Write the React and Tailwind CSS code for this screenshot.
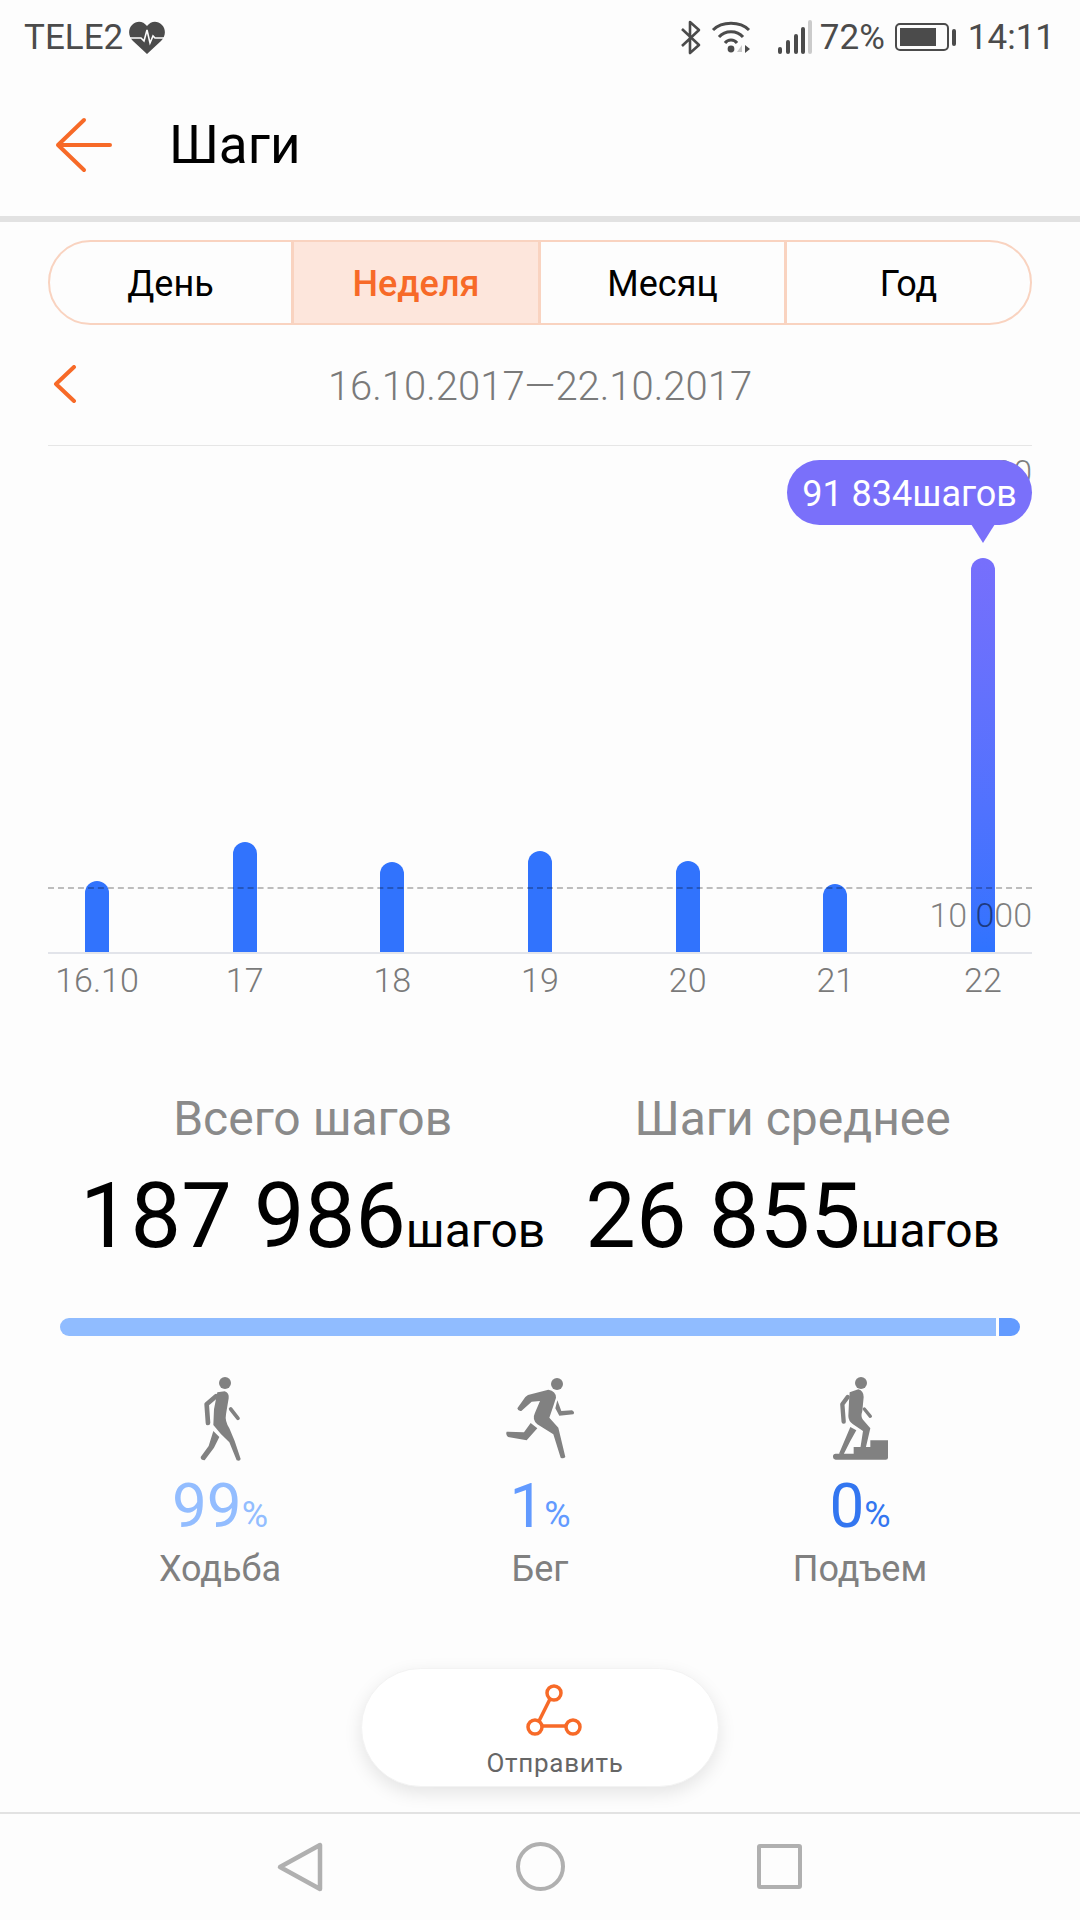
const tabs = [
  { label: "День", width: "w-[241px]" },
  { label: "Неделя", width: "w-[247px]" },
  { label: "Месяц", width: "w-[246px]" },
  { label: "Год", width: "flex-1" },
];

const days = [
  { label: "16.10", height: 71 },
  { label: "17", height: 110 },
  { label: "18", height: 90 },
  { label: "19", height: 101 },
  { label: "20", height: 91 },
  { label: "21", height: 68 },
  { label: "22", height: 394, peak: true },
];

function HeartIcon() {
  return (
    <svg width="36" height="33" viewBox="0 0 36 33">
      <path
        d="M18 33 L4 20 C-1 15 -1 8 3 4 C8 -1 14 0 18 5 C22 0 28 -1 33 4 C37 8 37 15 32 20 Z"
        fill="#4b4b4b"
      />
      <path
        d="M1 17 H12 L15 20 L18 9 L21 22 L24 15 L26 17 H35"
        fill="none"
        stroke="#fdfdfd"
        strokeWidth="1.6"
      />
    </svg>
  );
}

function StatusIcons() {
  return (
    <div className="flex items-center">
      {/* bluetooth */}
      <svg width="22" height="35" viewBox="0 0 22 35" className="mr-[9px]">
        <path
          d="M2 9 L19 25 L10 33 V2 L19 10 L2 26"
          fill="none"
          stroke="#4b4b4b"
          strokeWidth="2.6"
          strokeLinejoin="round"
        />
      </svg>
      {/* wifi */}
      <svg width="42" height="34" viewBox="0 0 42 34" className="mr-[25px]">
        <path d="M2 10 C11 1 29 1 38 10" fill="none" stroke="#4b4b4b" strokeWidth="3" />
        <path d="M8 17 C14 10 26 10 32 17" fill="none" stroke="#4b4b4b" strokeWidth="3" />
        <path d="M14 23 C17 19 23 19 26 23" fill="none" stroke="#4b4b4b" strokeWidth="3" />
        <circle cx="20" cy="29" r="3.4" fill="#4b4b4b" />
        <path d="M26 32 L31 25 V32 Z" fill="#c9c9c9" />
        <path d="M34 25 V33 L39 29 Z" fill="#4b4b4b" />
      </svg>
      {/* signal */}
      <svg width="35" height="35" viewBox="0 0 35 35" className="mr-[7px]">
        <rect x="0" y="27" width="4" height="7" rx="2" fill="#4b4b4b" />
        <rect x="8" y="20" width="4" height="14" rx="2" fill="#4b4b4b" />
        <rect x="16" y="14" width="4" height="20" rx="2" fill="#4b4b4b" />
        <rect x="23" y="7" width="4" height="27" rx="2" fill="#4b4b4b" />
        <rect x="30" y="0" width="4" height="34" rx="2" fill="#cbcbcb" />
      </svg>
      <span className="text-[35px] leading-none text-[#4b4b4b] mr-[10px]">72%</span>
      {/* battery */}
      <div className="flex items-center mr-[12px]">
        <div className="w-[54px] h-[28px] border-2 border-[#4b4b4b] rounded-[5px] p-[3px]">
          <div className="w-[36px] h-full bg-[#4b4b4b]" />
        </div>
        <div className="w-[4px] h-[17px] ml-[3px] rounded-sm bg-[#4b4b4b]" />
      </div>
      <span className="text-[35px] leading-none text-[#4b4b4b]">14:11</span>
    </div>
  );
}

function WalkIcon() {
  return (
    <svg width="60" height="95" viewBox="0 0 180 285" fill="#818181">
      <circle cx="105" cy="36" r="18" />
      <path d="M82 64 L104 61 Q118 66 116 82 L108 130 Q104 150 118 172 L134 210 L152 264 Q150 272 140 268 L118 214 L92 188 L70 162 L72 115 Z" />
      <path d="M70 180 L88 198 L72 230 L44 268 Q32 268 32 258 L56 225 Z" />
      <path d="M78 76 L50 100 L54 156" fill="none" stroke="#818181" strokeWidth="14" strokeLinecap="round" strokeLinejoin="round" />
      <path d="M122 114 L144 142" fill="none" stroke="#818181" strokeWidth="11" strokeLinecap="round" />
    </svg>
  );
}

function RunIcon() {
  return (
    <svg width="80" height="95" viewBox="0 0 240 285" fill="#818181">
      <circle cx="171" cy="39" r="18" />
      <path d="M84 72 L145 56 Q168 60 168 80 L160 105 L148 140 L175 170 L196 258 Q190 264 182 260 L160 190 L112 160 Q95 145 105 125 L120 90 L95 92 L64 120 Q54 122 52 112 L76 78 Z" />
      <path d="M92 156 L112 172 L80 208 L24 198 Q16 190 20 182 L72 184 Z" />
      <path d="M172 88 L184 120 L216 118 Q226 124 220 130 L178 134 L166 112 Z" />
    </svg>
  );
}

function StairsIcon() {
  return (
    <svg width="75" height="95" viewBox="0 0 225 285" fill="#818181">
      <circle cx="114" cy="36" r="18" />
      <path d="M80 64 L106 55 Q122 60 122 78 L118 120 Q112 138 120 146 L142 172 L128 232 L112 232 L120 180 L90 160 Q76 150 76 135 L78 92 Z" />
      <path d="M82 168 L100 178 L82 210 L62 250 L48 248 Z" />
      <path d="M74 78 L58 100 L62 152" fill="none" stroke="#818181" strokeWidth="13" strokeLinecap="round" strokeLinejoin="round" />
      <path d="M124 114 L142 136" fill="none" stroke="#818181" strokeWidth="10" strokeLinecap="round" />
      <path d="M30 256 Q30 248 38 248 L92 248 L92 228 L142 228 L142 208 L195 208 L195 260 Q195 266 188 266 L38 266 Q30 266 30 256 Z" />
    </svg>
  );
}

function Stat({ title, value }) {
  return (
    <div className="flex flex-col items-center">
      <div className="text-[48px] leading-[52px] text-[#8a8a8a] -mt-[1px]">{title}</div>
      <div className="mt-[22px] flex items-baseline text-black whitespace-nowrap">
        <span className="text-[90px] leading-[100px]">{value}</span>
        <span className="text-[48px] leading-none">шагов</span>
      </div>
    </div>
  );
}

function Activity({ icon, value, valueClass, label }) {
  return (
    <div className="flex flex-col items-center">
      <div className="h-[95px] flex items-center">{icon}</div>
      <div className={`flex items-baseline h-[76px] mt-[2px] ${valueClass}`}>
        <span className="text-[62px] leading-[76px]">{value}</span>
        <span className="text-[36px] leading-none">%</span>
      </div>
      <div className="text-[36px] leading-[40px] text-[#808080] mt-[5px]">{label}</div>
    </div>
  );
}

export default function App() {
  return (
    <div className="w-[1080px] h-[1920px] bg-[#fdfdfd] flex flex-col font-['Roboto',sans-serif] overflow-hidden">
      {/* Status bar */}
      <div className="h-[70px] shrink-0 pl-[24px] pr-[25px] pt-[4px] flex items-center justify-between">
        <div className="flex items-center gap-[6px]">
          <span className="text-[35px] leading-none text-[#4b4b4b]">TELE2</span>
          <HeartIcon />
        </div>
        <StatusIcons />
      </div>

      {/* Header */}
      <div className="h-[146px] shrink-0 flex items-center pl-[55px]">
        <svg width="58" height="56" viewBox="0 0 58 56" className="mt-[3px]">
          <path
            d="M29 3 L3 28 L29 53 M3 28 H55"
            fill="none"
            stroke="#f76a28"
            strokeWidth="4"
            strokeLinecap="round"
            strokeLinejoin="round"
          />
        </svg>
        <span className="ml-[56px] mt-[4px] text-[53px] leading-none text-black">Шаги</span>
      </div>
      <div className="h-[6px] shrink-0 bg-[#e2e2e2]" />

      {/* Tabs */}
      <div className="mt-[18px] mx-[48px] h-[85px] shrink-0 flex rounded-full border-[2px] border-[#f9d3c0] overflow-hidden">
        {tabs.map((t, i) => (
          <div
            key={t.label}
            className={
              "flex items-center justify-center pt-[3px] text-[36px] " +
              t.width +
              " " +
              (i > 0 ? "border-l-[3px] border-[#f9d3c0] " : "") +
              (i === 1 ? "bg-[#fde6dc] text-[#f76a28] font-medium" : "text-black")
            }
          >
            {t.label}
          </div>
        ))}
      </div>

      {/* Date range */}
      <div className="h-[120px] shrink-0 relative flex items-center justify-center pt-[3px]">
        <svg width="24" height="38" viewBox="0 0 24 38" className="absolute left-[53px] top-[40px]">
          <path
            d="M21 2 L3 19 L21 36"
            fill="none"
            stroke="#f76a28"
            strokeWidth="4"
            strokeLinecap="round"
            strokeLinejoin="round"
          />
        </svg>
        <span className="text-[40px] font-light text-[#7a7a7a]">16.10.2017—22.10.2017</span>
      </div>

      {/* Chart */}
      <div className="relative mx-[48px] h-[509px] shrink-0 border-t border-b-2 border-t-[#e6e6e6] border-b-[#e2e4ea] flex items-end justify-between px-[37px]">
        <span className="absolute right-0 top-[8px] text-[34px] leading-[36px] font-light text-black/50">100 000</span>
        {days.map((d) => (
          <div
            key={d.label}
            className={
              "w-[24px] rounded-t-full " +
              (d.peak ? "bg-linear-to-b from-[#776ffc] to-[#2f73ff]" : "bg-[#3173fd]")
            }
            style={{ height: d.height }}
          />
        ))}
        <div className="absolute inset-x-0 top-[441px] border-t-2 border-dashed border-black/25" />
        <span className="absolute right-0 top-[451px] text-[34px] leading-[36px] font-light text-black/50">10 000</span>
        {/* Tooltip */}
        <div className="absolute right-0 top-[14px] h-[65px] w-[245px] pt-[3px] rounded-full bg-[#7a70fa] flex items-center justify-center text-[36px] text-white whitespace-nowrap">
          91 834шагов
          <div className="absolute left-[184px] top-[64px] w-0 h-0 border-x-[12px] border-x-transparent border-t-[19px] border-t-[#7a70fa]" />
        </div>
      </div>

      {/* Axis labels */}
      <div className="mx-[48px] h-[52px] shrink-0 flex items-center justify-between px-[37px]">
        {days.map((d) => (
          <div key={d.label} className="w-[24px] flex justify-center text-[34px] font-light text-[#7a7a7a] whitespace-nowrap">
            {d.label}
          </div>
        ))}
      </div>

      {/* Totals */}
      <div className="mt-[88px] pl-[80px] pr-[80px] flex justify-between shrink-0">
        <Stat title="Всего шагов" value="187 986" />
        <Stat title="Шаги среднее" value="26 855" />
      </div>

      {/* Share of activity */}
      <div className="mt-[51px] mx-[60px] h-[18px] shrink-0 flex rounded-full overflow-hidden gap-[3px]">
        <div className="w-[936px] bg-[#90bcff]" />
        <div className="flex-1 bg-[#639bff]" />
      </div>
      <div className="mt-[35px] mx-[60px] grid grid-cols-3 shrink-0">
        <Activity icon={<WalkIcon />} value="99" valueClass="text-[#93bdff]" label="Ходьба" />
        <Activity icon={<RunIcon />} value="1" valueClass="text-[#629aff]" label="Бег" />
        <Activity icon={<StairsIcon />} value="0" valueClass="text-[#3376f0]" label="Подъем" />
      </div>

      {/* Share button */}
      <div className="flex-1 flex items-end justify-center pb-[25px]">
        <div className="w-[358px] h-[119px] rounded-full bg-white shadow-[0_6px_18px_rgba(0,0,0,0.1)] border border-[#f3f3f3] flex flex-col items-center pl-[30px] pt-[14px]">
          <svg width="58" height="54" viewBox="0 0 58 54">
            <path d="M24 16 L12 40 M16 43 H40" fill="none" stroke="#f76a28" strokeWidth="3.5" />
            <circle cx="28" cy="10" r="7" fill="#fff" stroke="#f76a28" strokeWidth="3.5" />
            <circle cx="9" cy="44" r="7" fill="#fff" stroke="#f76a28" strokeWidth="3.5" />
            <circle cx="47" cy="44" r="7" fill="#fff" stroke="#f76a28" strokeWidth="3.5" />
          </svg>
          <span className="text-[26px] leading-[30px] text-[#666] tracking-[0.7px] mt-[11px]">Отправить</span>
        </div>
      </div>

      {/* Nav bar */}
      <div className="h-[108px] shrink-0 border-t-2 border-[#e2e2e2] flex items-start pt-[27px] pl-[276px] pr-[278px] justify-between">
        <svg width="48" height="52" viewBox="0 0 48 52">
          <path
            d="M44 4 V48 L4 26 Z"
            fill="none"
            stroke="#b0b0b0"
            strokeWidth="4.5"
            strokeLinejoin="round"
          />
        </svg>
        <div className="w-[49px] h-[49px] rounded-full border-[4.5px] border-[#b0b0b0] mt-[1px]" />
        <div className="w-[45px] h-[45px] rounded-[3px] border-[4.5px] border-[#b0b0b0] mt-[3px]" />
      </div>
    </div>
  );
}
